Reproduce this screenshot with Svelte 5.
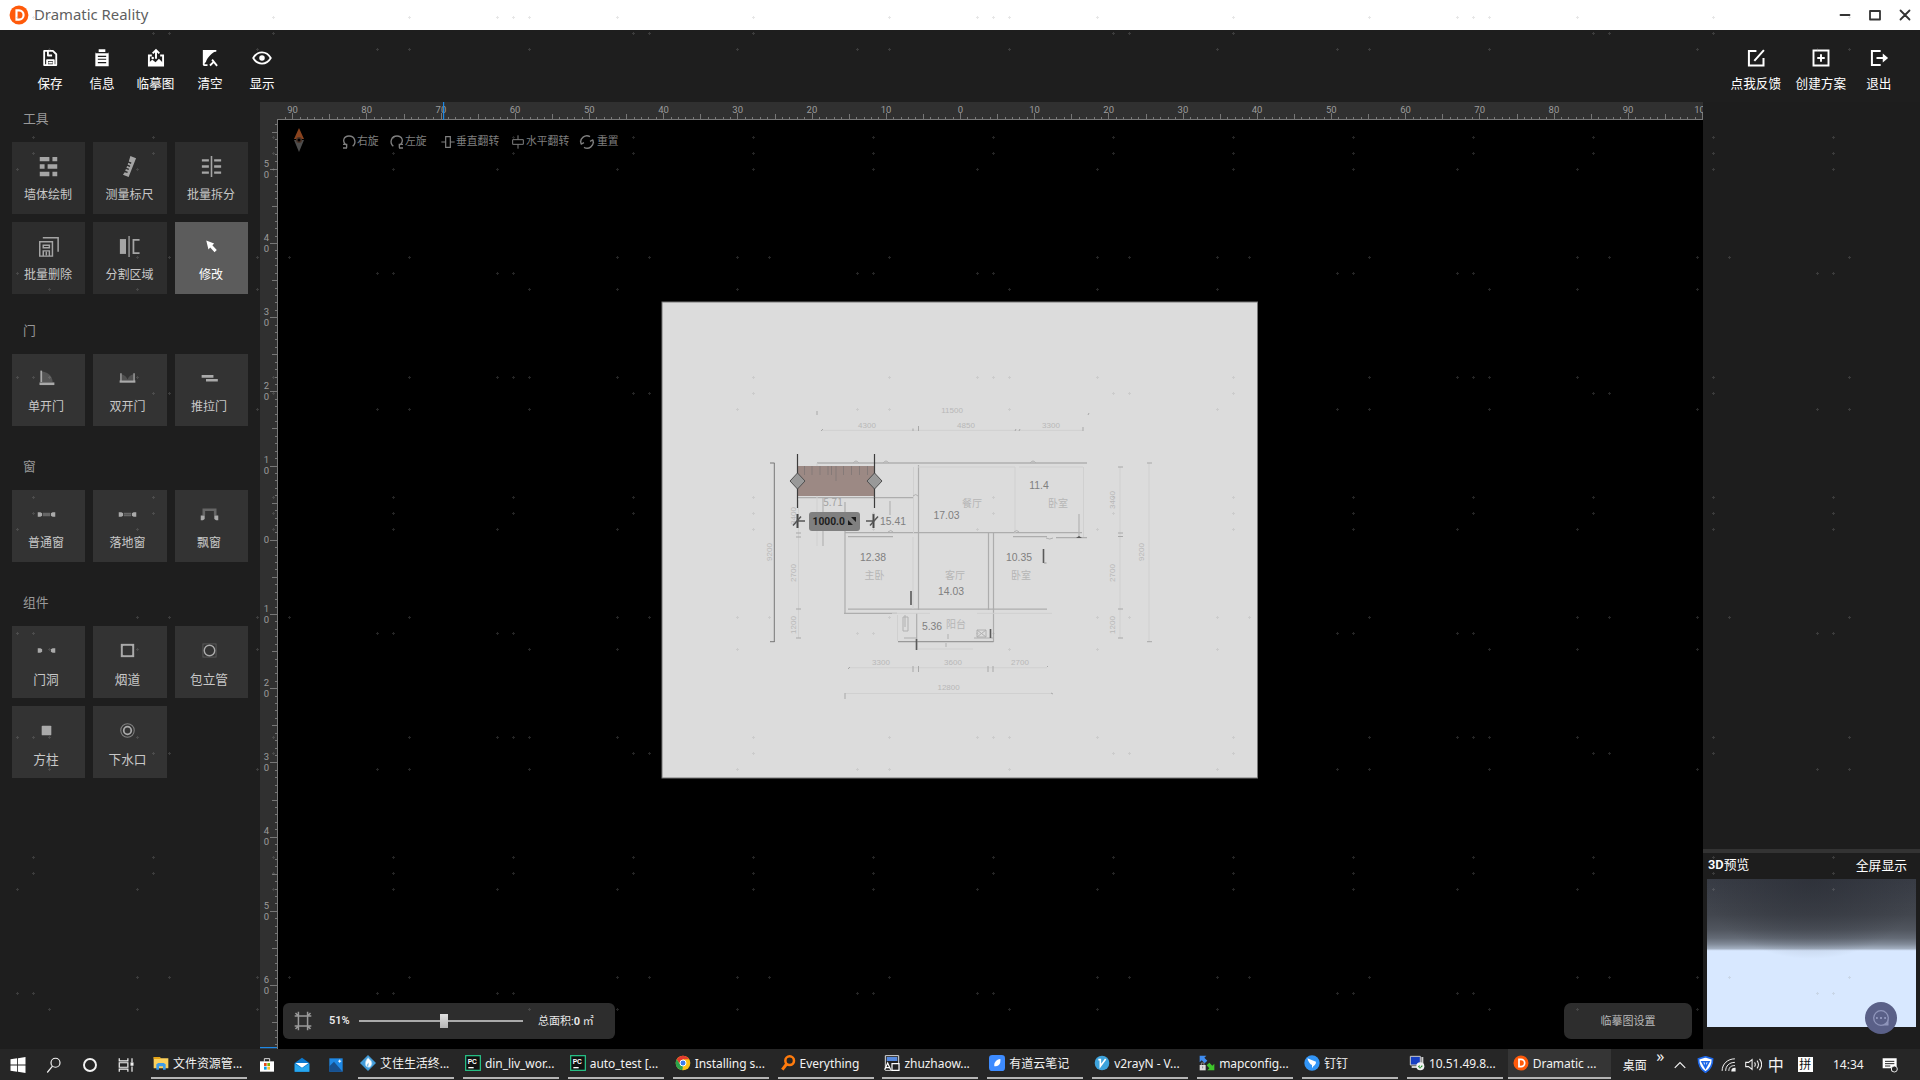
<script>
  const toolbar = [
    ['save', '保存'], ['info', '信息'], ['upload', '临摹图'], ['clear', '清空'], ['eye', '显示']
  ];
  const account = [['edit', '点我反馈'], ['plus', '创建方案'], ['exit', '退出']];
  const groups = [
    { title: '工具', kind: 'tools', items: [['wall', '墙体绘制'], ['measure', '测量标尺'], ['split', '批量拆分'], ['delete', '批量删除'], ['divide', '分割区域'], ['pointer', '修改']] },
    { title: '门', kind: 'parts', items: [['door1', '单开门'], ['door2', '双开门'], ['slide', '推拉门']] },
    { title: '窗', kind: 'parts', items: [['win', '普通窗'], ['win2', '落地窗'], ['bay', '飘窗']] },
    { title: '组件', kind: 'parts wide', items: [['hole', '门洞'], ['flue', '烟道'], ['pipe', '包立管'], ['column', '方柱'], ['drain', '下水口']] }
  ];
  const flips = [['cw', '右旋'], ['ccw', '左旋'], ['vflip', '垂直翻转'], ['hflip', '水平翻转'], ['reset', '重置']];
  const tasks = [
    ['aijia', '艾佳生活终...'], ['pc', 'din_liv_wor...'], ['pc', 'auto_test [...'], ['chrome', 'Installing s...'],
    ['every', 'Everything'], ['zhu', 'zhuzhaow...'], ['note', '有道云笔记'], ['v2', 'v2rayN - V...'],
    ['map', 'mapconfig...'], ['ding', '钉钉'], ['remote', '10.51.49.8...'], ['dr', 'Dramatic ...']
  ];

  const STEP = 7.42;
  const hTicks = [];
  for (let i = -91; i <= 100; i++) hTicks.push({ i, x: 960 + i * STEP });
  const vTicks = [];
  for (let i = -56; i <= 68; i++) vTicks.push({ i, y: 540.3 + i * STEP });

  // Registration marks inside one 480 x 360 tile, as [column, row] offsets.
  const marks = [
    [17, 17], [33, 17], [49, 17], [137, 17], [273, 17], [409, 17],
    [153, 33], [169, 33], [273, 33],
    [49, 49], [257, 49], [377, 49], [409, 49],
    [33, 137], [153, 137], [273, 137], [393, 137],
    [33, 153], [153, 153], [273, 153], [393, 153],
    [17, 169], [137, 169], [273, 169], [393, 169],
    [137, 257], [169, 257], [257, 257], [289, 257], [409, 257],
    [17, 273], [33, 273], [377, 273], [393, 273],
    [49, 289], [137, 289], [257, 289]
  ];

  const areas = [
    ['11.4', 1039, 489], ['17.03', 946.5, 518.5], ['15.41', 893, 525], ['12.38', 873, 561],
    ['10.35', 1019, 561], ['14.03', 951, 595], ['5.36', 932, 630]
  ];
  const rooms = [['餐厅', 972, 507], ['卧室', 1058, 507], ['主卧', 874.5, 579], ['客厅', 955, 579], ['卧室', 1021, 579], ['阳台', 956, 628]];
  const dims = [
    ['11500', 952, 412.5], ['4300', 867, 427.5], ['4850', 966, 427.5], ['3300', 1051, 427.5],
    ['3300', 881, 664.5], ['3600', 953, 664.5], ['2700', 1020, 664.5], ['12800', 948.6, 690]
  ];
  const sideDims = [
    ['9200', 771.5, 552], ['3400', 796, 516], ['2700', 796, 573], ['1200', 796, 625],
    ['3400', 1115, 500], ['2700', 1115, 573], ['1200', 1115, 625], ['9200', 1144, 552]
  ];
</script>

{#snippet icon(n)}
  <svg class="ic {n}" width="24" height="24" viewBox="0 0 24 24" fill="none" stroke="currentColor" stroke-width="2">
    {#if n === 'save'}
      <path d="M5 3.500h10.500l4 4V20.500H5zM9.500 4v5h5M8.500 20v-5.500h8V20M10 17.500h5" stroke-width="2.200" stroke-linejoin="round" />
    {:else if n === 'info'}
      <path d="M4 5h16v17H4zM8 1.500h8V5H8z" fill="currentColor" stroke="none" /><path d="M4 5.500h16M7 10h10M7 13.500h10M7 17.500h10" stroke="#1e1e1e" stroke-width="1.400" />
    {:else if n === 'upload'}
      <path d="M7 9H3.500v12h17V9H17M12 13V3M8 6.500l4-4 4 4" stroke-width="2.300" /><path d="M3 21v-3l4.500-4 4 3 4-4 5 5v3z" fill="currentColor" stroke="none" /><circle cx="8" cy="12" r="1.500" fill="currentColor" stroke="none" />
    {:else if n === 'clear'}
      <path d="M19.500 3.500H4.500v17M4 20.500h5M14.500 14l6 7.500M12 21l5-5" stroke-width="2.200" /><path d="M4 3h16c-6 3-11 8-13 14l-3 2z" fill="currentColor" stroke="none" />
    {:else if n === 'eye'}
      <path d="M1.500 12c5-9 16-9 21 0-5 9-16 9-21 0z" stroke-width="2.200" /><circle cx="12" cy="12" r="3.300" fill="currentColor" stroke="none" />
    {:else if n === 'edit'}
      <path d="M12.500 3.500H3.500v17.500H21v-9M10 15.500L21.500 2.500" stroke-width="2.400" />
    {:else if n === 'plus'}
      <path d="M3 3h18v18H3zM12 7.500v9M7.500 12h9" stroke-width="2.300" />
    {:else if n === 'exit'}
      <path d="M14 3.500H3.500v17H14M9 12h10" stroke-width="2.400" /><path d="M16.500 6.500l6.500 5.500-6.500 5.500z" fill="currentColor" stroke="none" />
    {:else if n === 'wall'}
      <path d="M2 1h11v5H2zM16.500 1H22v5h-5.500zM2 9.500h5.500v5H2zM11 9.500h11v5H11zM2 18h11v5H2zM16.500 18H22v5h-5.500z" fill="currentColor" stroke="none" />
    {:else if n === 'measure'}
      <path d="M13 0l6.500 2.500L11 24l-6.500-2.500 2-3 3 1 .6-1.500-3-1.200.8-2 3 1.200.6-1.500-3-1.200.8-2 3 1.200.6-1.500-3-1.200.8-2 3 1.200.5-1.500-3-1.200z" fill="currentColor" stroke="none" />
    {:else if n === 'split'}
      <path d="M12-1v26" stroke-width="1.800" /><path d="M1 5h8M1 12h8M1 19h8M15 5h8M15 12h8M15 19h8" stroke-width="2.800" />
    {:else if n === 'delete'}
      <path d="M2 6.500h14.500V23H2zM5.500 2H23v16M6 10.500h7v3H6zM6 22.500V17h7v5.500M9.500 18v4" stroke-width="1.700" />
    {:else if n === 'divide'}
      <path d="M1 3.500h7v17H1z" fill="currentColor" stroke="none" /><path d="M11.500-1v26" stroke-width="1.500" /><path d="M23.500 4.500H16.500v15h7" />
    {:else if n === 'pointer'}
      <path d="M6 5l9 3.500-2 2 5 5.500-2.500 2.500-5-5.500-2 2.500z" fill="currentColor" stroke="none" />
    {:else if n === 'door1'}
      <path d="M6 4c8 0 13 6 13 12H6z" fill="#555" stroke="none" /><path d="M6 3v13" stroke-width="2" /><path d="M4 18h17" stroke-width="3" />
    {:else if n === 'door2'}
      <path d="M5 7c4 1 6 3 7 6 1-3 3-5 7-6v7H5z" fill="#505050" stroke="none" /><path d="M4.500 6v9M19.500 6v9" stroke-width="1.500" /><path d="M3 15.500h18" stroke-width="2.600" />
    {:else if n === 'slide'}
      <path d="M3 9.500h13.500M8 14h13.500" stroke-width="3" />
    {:else if n === 'win' || n === 'win2'}
      <path d="M8 12h8" stroke="#666" stroke-width="4" /><path d="M8 12h8" stroke="#555" stroke-width={n === 'win' ? 0 : 1} /><path d="M2 9.500h3l2 1v3l-2 1H2zM22 9.500h-3l-2 1v3l2 1h3z" fill="currentColor" stroke="none" />
    {:else if n === 'bay'}
      <path d="M5.500 13V6.500h13V13" stroke="#666" stroke-width="3" /><path d="M2 13h4.500v4l-2 1.500H2zM22 13h-4.500v4l2 1.500H22z" fill="currentColor" stroke="none" />
    {:else if n === 'hole'}
      <path d="M2 9.500h3l2 1v3l-2 1H2zM22 9.500h-3l-2 1v3l2 1h3z" fill="currentColor" stroke="none" />
    {:else if n === 'flue'}
      <rect x="5.500" y="5.500" width="13" height="13" stroke-width="2.200" /><path d="M4.500 4.500h4.500l-4.500 4.500zM15 4.500h4.500V9zM4.500 15v4.500H9zM19.500 15v4.500H15z" fill="currentColor" stroke="none" />
    {:else if n === 'pipe'}
      <rect x="4.500" y="4.500" width="15" height="15" stroke="#5c5c5c" stroke-width="1" /><circle cx="12" cy="12" r="6" stroke-width="1.600" />
    {:else if n === 'column'}
      <rect x="6.500" y="6.500" width="11" height="11" rx="1" fill="currentColor" stroke="none" />
    {:else if n === 'drain'}
      <circle cx="12" cy="12" r="7.700" stroke="#808080" stroke-width="1.200" /><circle cx="12" cy="12" r="4.300" stroke-width="2" />
    {:else if n === 'cw'}
      <path d="M8.500 20.500v-5H3M8 16.500C1 11 4 3 12 3c8.500 0 12 9.500 5.500 15.500M3 21h6" />
    {:else if n === 'ccw'}
      <path d="M15.500 20.500v-5H21M16 16.500C23 11 20 3 12 3c-8.500 0-12 9.500-5.500 15.500M21 21h-6" />
    {:else if n === 'vflip'}
      <path d="M8.500 4h7v16h-7zM2 12h6.500M15.500 12H22" stroke-width="1.800" />
    {:else if n === 'hflip'}
      <path d="M4 8.500h16v7H4zM12 2v6.500M12 15.500V22" stroke-width="1.500" />
    {:else if n === 'reset'}
      <path d="M3 14.500A9.200 9.200 0 0 1 16.500 4M21 9.500A9.200 9.200 0 0 1 7.500 20M2 10l1.500 5 4-2M22 14l-1.500-5-4 2" stroke-width="2" />
    {:else if n === 'start'}
      <path d="M3 5l8-1v7.500H3zM12 3.800L21 2.500v9h-9zM3 12.500h8V20l-8-1zM12 12.500h9v9l-9-1.300z" fill="#fff" stroke="none" />
    {:else if n === 'search'}
      <circle cx="14" cy="9" r="6" stroke-width="1.600" /><path d="M10 13.500l-7 8.500" stroke-width="1.600" />
    {:else if n === 'cortana'}
      <circle cx="12" cy="12" r="8" stroke-width="2.600" />
    {:else if n === 'taskview'}
      <path d="M3 3v3.500h11.500V3M3 21v-3.500h11.500V21M3 9h11.500v6H3zM20 3v5M20 14v7" stroke-width="1.600" /><path d="M19 9.500h2v2.500h-2z" fill="#fff" />
    {:else if n === 'folder'}
      <path d="M1 3h9l2 2h11v15H1z" fill="#fbd05c" stroke="none" /><path d="M1 3h9l2 3H1z" fill="#e3a315" stroke="none" /><path d="M5 22v-8l3-2h8l3 2v8h-4v-5H9v5z" fill="#3d9be8" stroke="none" />
    {:else if n === 'store'}
      <path d="M8 7V2.500h8V7" stroke="#ddd" stroke-width="1.500" /><path d="M1.500 6.500h21V22h-21z" fill="#fff" stroke="none" /><path d="M7.500 9h4v4.500h-4z" fill="#e64a19" stroke="none" /><path d="M12.500 9h4v4.500h-4z" fill="#7cb305" stroke="none" /><path d="M7.500 14.500h4V19h-4z" fill="#039be5" stroke="none" /><path d="M12.500 14.500h4V19h-4z" fill="#fbc02d" stroke="none" />
    {:else if n === 'mail'}
      <path d="M1 9l11-8 11 8v13H1z" fill="#0b79cf" stroke="none" /><path d="M2 9h20l-10 7z" fill="#fff" stroke="none" /><path d="M1 10l11 7 11-7v12H1z" fill="#27a7ee" stroke="none" />
    {:else if n === 'photos'}
      <path d="M2 2h20v20H2z" fill="#1e88e5" stroke="none" /><path d="M2 22v-8l7-7 13 15z" fill="#17508f" stroke="none" /><path d="M17.500 4v4.500M15.300 6.300h4.500" stroke="#fff" stroke-width="1.500" />
    {:else if n === 'aijia'}
      <path d="M12 0l12 12-12 12L0 12z" fill="#429bd8" stroke="none" /><path d="M12 4c6 5 8 9 3 14-7 2-10-6-3-14zm1 8c-3 2-3 4-1 6" fill="#fff" stroke="#9bd1f3" stroke-width="1" />
    {:else if n === 'pc'}
      <rect x="1" y="1" width="22" height="22" fill="#111" stroke="#27c98b" stroke-width="1.800" /><path d="M5 19h8" stroke="#fff" /><text x="4" y="13" class="pctext">PC</text>
    {:else if n === 'chrome'}
      <circle cx="12" cy="12" r="11" fill="#fbc116" stroke="none" /><path d="M2.500 6.500A11 11 0 0 1 21.500 6.500H12l-4 8z" fill="#e33b2e" stroke="none" /><path d="M2.500 6.500l6 9 3.500 1-1 6.500A11 11 0 0 1 2.500 6.500z" fill="#2ba24c" stroke="none" /><circle cx="12" cy="12" r="4.500" fill="#3b7ded" stroke="#fff" stroke-width="1.500" />
    {:else if n === 'every'}
      <circle cx="14.500" cy="8.500" r="6.500" stroke="#ff7b0d" stroke-width="3.800" /><path d="M10 13.500L3.500 22" stroke="#ff7b0d" stroke-width="4.500" />
    {:else if n === 'zhu'}
      <path d="M2 1h20v22H2z" fill="#222" stroke="#ddd" stroke-width="1.500" /><path d="M4 3h16v6H4z" fill="#5588dd" stroke="none" /><path d="M12 13h10.500v10H12zM1 22l4.500-10L10 22M3 19h5" fill="#222" stroke="#fff" stroke-width="1.800" />
    {:else if n === 'note'}
      <rect x="0" y="0" width="24" height="24" rx="5" fill="#3d8bff" stroke="none" /><path d="M17 6c1 8-3 11-9 11-1-6 3-10 9-11z" fill="#fff" stroke="none" />
    {:else if n === 'v2'}
      <circle cx="12" cy="12" r="11" fill="#3ea3dc" stroke="none" /><path d="M6.500 7h3v10l8-11" stroke="#fff" stroke-width="2.400" />
    {:else if n === 'map'}
      <path d="M1 1h10L8 4l4.500 4.500-4 4L4 8l-3 3z" fill="#3f8cf0" stroke="none" /><path d="M23 23H12.500l3-3-4-4.500 4-4L20 16l3-3z" fill="#3ec52b" stroke="none" /><path d="M1 15h9v8H1z" fill="#ddd" stroke="none" /><path d="M3.500 15v-3h4v3M5.500 17v3" stroke="#888" stroke-width="1.500" />
    {:else if n === 'ding'}
      <circle cx="12" cy="12" r="11.500" fill="#3295f6" stroke="none" /><path d="M5 5l13 5c0 4-2 5-4 7l-2 3v-5C9 14 7 11 5 5z" fill="#fff" stroke="none" />
    {:else if n === 'remote'}
      <path d="M2 2h15v13H2z" fill="#173fc2" stroke="#ccc" stroke-width="1.500" /><path d="M4 18h10M20 3v10" stroke="#ccc" stroke-width="3" /><circle cx="17" cy="17" r="6" fill="#f3f3f3" stroke="none" /><path d="M14 18l2-2M18 18l2-2M15 19h3" stroke="#21922b" stroke-width="1.600" />
    {:else if n === 'dr'}
      <circle cx="12" cy="12" r="11.300" fill="#ff5a0a" stroke="none" /><path d="M9 6.500h3a5.500 5.500 0 0 1 0 11H9z" stroke="#fff" stroke-width="2.600" />
    {:else if n === 'chev'}
      <path d="M3 17l9-9 9 9" stroke-width="2" />
    {:else if n === 'shield'}
      <path d="M12 1l10 3c0 10-3 15-10 19C5 19 2 14 2 4z" fill="#fff" stroke="#1d67e8" stroke-width="2.400" /><path d="M7 8h10l-5 9zM12 8v8" stroke="#1d67e8" stroke-width="2.200" />
    {:else if n === 'wifi'}
      <path d="M3 21C3 11 11 4 21 4M8 21c0-7 5-12 13-12M12.500 21c0-5 3-7.500 8.500-7.500" stroke-width="1.400" /><path d="M17 21c0-2 1-3.500 4-3.500V21z" fill="currentColor" />
    {:else if n === 'sound'}
      <path d="M1 9h4l5-4v14l-5-4H1zM13.500 9q2 3 0 6M17 6.500q4 5.500 0 11M20.500 4q6 8 0 16" stroke-width="1.500" />
    {:else if n === 'notif'}
      <path d="M1 2h21v15h-5l-3 5v-5H1z" fill="#fff" stroke="none" /><path d="M4.500 6.500h14M4.500 10h14M4.500 13.500h8" stroke="#262626" stroke-width="1.500" /><circle cx="18.500" cy="18" r="4.500" fill="#262626" stroke="#fff" stroke-width="1.300" />
    {:else if n === 'fit'}
      <path d="M6.500 6h11v12h-11zM6.500 6V1M6.500 6H2M17.500 6V1M17.500 6H22M6.500 18v5M6.500 18H2M17.500 18v5M17.500 18H22M17.500 6L21 2.500M6.500 18L3 21.500M17.500 18l3.500 3.500M6.500 6L3 2.500" stroke-width="1.800" />
    {/if}
  </svg>
{/snippet}

<div class="app">
  <header class="title">
    {@render icon('dr')}
    <span>Dramatic Reality</span>
    <svg class="controls" width="90" height="30" viewBox="0 0 90 30" fill="none" stroke="#333" stroke-width="1.800">
      <path d="M10.500 15h9M40 11h10v8.500H40zM70.500 10.500l9 9M79.500 10.500l-9 9" stroke-linejoin="round" stroke-linecap="round" />
    </svg>
  </header>

  <nav class="menu">
    <div class="main-menu">
      {#each toolbar as [i, label]}<button>{@render icon(i)}<span>{label}</span></button>{/each}
    </div>
    <div class="side-menu">
      {#each account as [i, label]}<button>{@render icon(i)}<span>{label}</span></button>{/each}
    </div>
  </nav>

  <main>
    <aside class="library">
      {#each groups as g}
        <section class={g.kind}>
          <h2>{g.title}</h2>
          <div class="tiles">
            {#each g.items as [i, label]}
              <button class="tile" class:active={i === 'pointer'}>{@render icon(i)}<span>{label}</span></button>
            {/each}
          </div>
        </section>
      {/each}
    </aside>

    <div class="workspace">
      <svg class="hruler" width="1443" height="18" viewBox="260 102 1443 18">
        {#each hTicks as t}
          <rect x={Math.round(t.x)} y={t.i % 10 === 0 ? 113 : t.i % 5 === 0 ? 114 : 117} width="1" height="6" fill="#777" />
          {#if t.i % 10 === 0}<text x={t.x + 0.3} y="112.800">{Math.abs(t.i)}</text>{/if}
        {/each}
        <rect x="277" y="119" width="1426" height="1" fill="#777" />
        <rect x="443" y="102" width="1.200" height="18" fill="#1e88e5" />
      </svg>
      <svg class="vruler" width="18" height="929" viewBox="260 120 18 929">
        {#each vTicks as t}
          <rect x={t.i % 10 === 0 ? 270 : t.i % 5 === 0 ? 272 : 275} y={Math.round(t.y - 0.5)} width="8" height="1" fill="#777" />
          {#if t.i === 0}
            <text x="266.500" y="543">0</text>
          {:else if t.i % 10 === 0}
            <text x="266.500" y={t.y - 2.7}>{Math.abs(t.i) / 10}</text><text x="266.500" y={t.y + 8.3}>0</text>
          {/if}
        {/each}
        <rect x="277" y="120" width="1" height="929" fill="#777" />
        <rect x="260" y="1047" width="17" height="1.200" fill="#1e88e5" />
      </svg>

      <div class="canvas">
        <svg class="plan" width="1425" height="929" viewBox="278 120 1425 929" fill="none">
          <rect x="662" y="302" width="595.500" height="476" fill="#dcdcdc" stroke="#777" stroke-width="1" />
          <g stroke="#adadad" stroke-width="1.200">
            <path d="M817 463H1087" stroke="#999" />
            <path d="M918.500 465V610M845 502V613M988.500 533V610M993.500 533V642M848 609.200H1047M848 536.700H893M1013 536.700H1047M1056 537.700H1087M798 497.700H913" />
            <path d="M898 641.700H993.500" stroke="#999" />
            <path d="M844 613.300H897M845 532.700H1082M916.700 613V650M904 638H917M974 638H993" />
            <path d="M823 498V546M890 501V515M1079 514V537" stroke="#b4b4b4" />
          </g>
          <g stroke="#d0d0d0">
            <path d="M913.500 467V533M1015 467V533M1083.500 467V537M817 463V546M918 467H1015M1019 467H1083M913 537V609M977 613.300H1052M917 649H973M821 430.300H1083M848 667.700H1047M845 693.500H1051M798.500 500V638M1120 467V638M1149 463V642M892 613.300H930M897.500 615V641" />
          </g>
          <g stroke="#777">
            <path d="M774.300 463V642M770 463h4.500M770 641.700h4.500" />
            <path d="M911 591V605M1043.500 549V563M916.500 639V650M990.500 629V638" stroke="#5a5a5a" stroke-width="1.600" />
            <path d="M1044 563h2.500" stroke="#999" />
            <path d="M1076 538l3-2 3 2z" fill="#555" stroke="none" />
          </g>
          <path d="M817 415v-4M1088 415l1-2M821 431l2-2M913 431v-2.500M918.500 431v-5M1015 431l1-2M1019 431l1-2M1083 431v-4M848 669l2-2M913 666v6M918.500 666v6M988 666v6M993 666v6M1047 667l1-1M845 693v6M1051 693l2 1M1118 467h5M1118 533h5M1118 536.500h5M1118 609h5M1118 638h5M1147 463h5M1147 641.700h5M796 533h5M796 537h5M796 609h5M796 638h5" stroke="#a8a8a8" />
          <path d="M853 463q3-4 6 0M883 463q3-4 6 0M1030 463q3-4 6 0M913 496q3-3 5 0M888 532q3-3 5 0M1014 532q3-3 5 0M1046 538q4 2 7 0M903 617h5v14h-5zM905 615v12M977 630h9v7h-9zM977 630l9 7M986 630l-9 7M948 634v5M946 643v4" stroke="#b0b0b0" />
          {#each areas as [t, x, y]}<text class="area" {x} {y}>{t}</text>{/each}
          {#each rooms as [t, x, y]}<text class="room" {x} {y}>{t}</text>{/each}
          {#each dims as [t, x, y]}<text class="dim" {x} {y}>{t}</text>{/each}
          {#each sideDims as [t, x, y]}<text class="dim" {x} {y} transform="rotate(-90 {x} {y})">{t}</text>{/each}
          <text class="room dark" x="833" y="506">5.71</text>

          <rect x="797.500" y="466" width="77" height="30" fill="#9c8984" />
          <path d="M804.500 466v9M812 466v9M820 466v9M828 466v9M831.500 466v9M843.500 466v9M851.500 466v9M859.500 466v9M867.500 466v9M836 466v15" stroke="#857a78" />
          <path d="M797.500 454V508M874.500 454V508" stroke="#3c3c3c" stroke-width="1.200" />
          <path d="M797.500 473l7.500 8-7.500 8-7.500-8zM874.500 473l7.500 8-7.500 8-7.500-8z" fill="#999" stroke="#505050" />
          <path d="M797.500 514v14M873.500 514v14" stroke="#484848" stroke-width="2" />
          <path d="M798 521h7M866 521h7M793 525.500l8-9M870 525.500l8-9" stroke="#555" stroke-width="1.500" />
          <rect x="809" y="512" width="51" height="19" rx="3" fill="#808080" />
          <text class="measure-label" x="812.500" y="525" textLength="32.500" lengthAdjust="spacingAndGlyphs">1000.0</text>
          <path d="M851 517h5v5zM848 520l5 5h-5z" fill="#1a1a1a" />
        </svg>

        <div class="flips">
          <svg class="compass" width="12" height="24" viewBox="0 0 12 24"><path d="M6 0l5 11H1z" fill="#8a431e" /><path d="M6 24L1 12h10z" fill="#4d4d4d" /><circle cx="6" cy="12" r="3" fill="#4a3328" /><circle cx="6" cy="12" r="1.500" fill="#000" /></svg>
          {#each flips as [i, label]}<button class={'f-' + i}>{@render icon(i)}<span>{label}</span></button>{/each}
        </div>

        <div class="zoombar">
          {@render icon('fit')}
          <b>51%</b>
          <div class="slider"><i></i></div>
          <span>总面积:<b>0</b> ㎡</span>
        </div>
        <button class="settings">临摹图设置</button>
      </div>
    </div>

    <aside class="preview">
      <div class="preview-head"><span><b>3D</b>预览</span><span>全屏显示</span></div>
      <div class="scene"></div>
      <button class="chat">
        <svg width="18" height="18" viewBox="0 0 18 18" fill="none" stroke="#8f95bb" stroke-width="1.300"><path d="M16.500 9v7.500H10z" fill="#8f95bb" stroke="none" /><circle cx="9" cy="9" r="7.300" fill="#5a6088" /><path d="M4 9h1.800M8 9h2M12.200 9H14" stroke-width="2" /></svg>
      </button>
    </aside>
  </main>

  <footer class="taskbar">
    <div class="pins">
      {#each ['start', 'search', 'cortana', 'taskview'] as n}<span>{@render icon(n)}</span>{/each}
    </div>
    <div class="task explorer">{@render icon('folder')}<span>文件资源管...</span></div>
    <div class="apps">
      {#each ['store', 'mail', 'photos'] as n}<span>{@render icon(n)}</span>{/each}
    </div>
    <div class="tasks">
      {#each tasks as [i, label]}<div class="task" class:current={i === 'dr'}>{@render icon(i)}<span>{label}</span></div>{/each}
    </div>
    <div class="tray">
      <span class="desk">桌面</span><span class="more">»</span>
      <span>{@render icon('chev')}</span><span>{@render icon('shield')}</span><span>{@render icon('wifi')}</span><span>{@render icon('sound')}</span>
      <span class="zh">中</span><span><em>拼</em></span><span class="time">14:34</span><span>{@render icon('notif')}</span>
    </div>
  </footer>

  <svg class="marks" width="1920" height="1049">
    <defs>
      <pattern id="marks" width="480" height="360" patternUnits="userSpaceOnUse">
        {#each marks as [x, y]}
          <path d="M{x - 1} {y}h3v1h-3zM{x} {y - 1}h1v3h-1z" fill="#999" fill-opacity="0.240" />
        {/each}
      </pattern>
    </defs>
    <rect width="1920" height="1049" fill="url(#marks)" />
  </svg>
</div>

<style>
  :global(body) { margin: 0; background: #000; overflow: hidden; }
  .app {
    position: relative; width: 1920px; height: 1080px; overflow: hidden;
    display: grid; grid-template-rows: 30px 72px 947px 31px;
    background: #1e1e1e; color: #ddd;
    font-family: "Noto Sans", "Noto Sans CJK SC", sans-serif; font-size: 12px;
  }
  button { margin: 0; padding: 0; border: 0; background: none; color: inherit; font: inherit; }
  svg { display: block; flex: none; }
  .title { display: flex; align-items: center; background: #fff; color: #5f5f5f; padding-left: 9px; font-size: 14.900px; }
  .title > span { line-height: 20px; margin-top: -2px; }
  .title .ic { width: 20px; height: 20px; margin-right: 5px; }
  .title .controls { margin-left: auto; margin-right: 3px; }
  .menu { display: flex; justify-content: space-between; color: #fff; font-size: 12.600px; }
  .main-menu { display: grid; grid-template-columns: 52px 52px 55px 54px 50px; padding-left: 24px; }
  .side-menu { display: grid; grid-template-columns: 66px 64px 52px; padding-right: 18px; }
  .menu button { display: flex; flex-direction: column; align-items: center; padding-top: 18px; white-space: nowrap; }
  .menu .ic { width: 20px; height: 20px; }
  .menu button span { line-height: 18px; margin-top: 7px; }

  main { display: grid; grid-template-columns: 260px 1443px 217px; }
  section { height: 136px; }
  section.tools { height: 212px; }
  h2 { margin: 0; height: 40px; box-sizing: border-box; padding: 7px 0 0 23px; font-size: 12.800px; line-height: 19px; font-weight: 400; color: #999; }
  .tiles { display: grid; grid-template-columns: 73px 74px 73px; gap: 8px; padding-left: 12px; }
  .tile { height: 72px; display: flex; flex-direction: column; align-items: center; background: #2d2d2d; color: #c8c8c8; padding-top: 14px; box-sizing: border-box; }
  .tile .ic { width: 21px; height: 21px; color: #a5a5a5; }
  .tile span { line-height: 18px; margin-top: 9px; }
  .tools .tile { padding-right: 1px; }
  .parts .tile { background: #333; padding-right: 5px; }
  .parts .tile .ic { color: #aaa; }
  .parts .tile span { margin-top: 8.500px; }
  .wide .tile { font-size: 12.700px; }
  .tile.active { background: #5c5c5c; color: #fff; }
  .tile.active .ic { color: #fff; }

  .workspace { display: grid; grid-template-columns: 18px 1425px; grid-template-rows: 18px 929px; background: #000; }
  .hruler { grid-column: 1 / 3; background: #303030; }
  .vruler { background: #303030; }
  .hruler text, .vruler text { font: 9.500px Roboto, sans-serif; fill: #9c9c9c; text-anchor: middle; }
  .canvas { position: relative; }
  .area { font: 10.400px "Liberation Sans", sans-serif; fill: #808080; text-anchor: middle; }
  .room { font: 10px "Noto Sans CJK SC", sans-serif; fill: #b6b6b6; text-anchor: middle; }
  .room.dark { fill: #a2a2a2; }
  .dim { font: 8px "Liberation Sans", sans-serif; fill: #b8b8b8; text-anchor: middle; }
  .measure-label { font: 700 11px Roboto, sans-serif; fill: #1e1e1e; }

  .flips { position: absolute; top: 8px; left: 15px; display: flex; align-items: center; color: #7f7f7f; font-size: 10.800px; height: 26px; }
  .compass { margin-right: 36px; margin-top: -2px; }
  .flips button { display: flex; align-items: center; line-height: 16px; }
  .flips .ic { width: 16px; height: 16px; margin-top: 1px; }
  .f-cw { width: 48px; }
  .f-ccw { width: 51px; }
  .f-vflip { width: 70px; }
  .f-hflip { width: 69px; }
  .f-reset span { margin-left: 2px; }

  .zoombar { position: absolute; left: 5px; top: 883px; width: 332px; height: 36px; border-radius: 6px; background: #2d2d2d; display: flex; align-items: center; font: 11px Roboto, "Noto Sans CJK SC", sans-serif; color: #e8e8e8; }
  .zoombar .ic { width: 20px; height: 20px; margin-left: 10px; color: #999; }
  .zoombar > b { width: 30px; margin: -2px 0 0 16px; font-size: 11px; font-weight: 600; }
  .slider { width: 164px; height: 2px; background: #aaa; }
  .slider i { display: block; width: 8px; height: 14px; margin: -6px 0 0 81px; background: linear-gradient(#e0e0e0, #b5b5b5); }
  .zoombar > span { margin: -2px 0 0 15px; white-space: pre; }
  .settings { position: absolute; left: 1286px; top: 883px; width: 128px; height: 36px; border-radius: 7px; background: #2d2d2d; color: #b9b9b9; font-size: 11px; padding-bottom: 2px; }

  .preview { position: relative; background: #1d1d1d; padding-top: 747px; }
  .preview-head { box-sizing: border-box; height: 30px; border-top: 4px solid #333; display: flex; align-items: center; justify-content: space-between; padding: 0 13px 3px 5px; color: #fff; font-size: 12.800px; line-height: 18px; }
  .preview-head b { font-weight: 600; font-family: Roboto, sans-serif; }
  .scene {
    height: 148px; margin: 0 4px;
    background:
      radial-gradient(ellipse 110px 80px at 50% 0, #2a2d35aa, transparent),
      linear-gradient(#383c45 0, #42464e 24%, #50555e 34%, #646b76 40%, #818a98 44%, #a2aebf 47%, #d8e8ff 48.500%);
  }
  .preview .scene { margin-top: 0; }
  .preview .preview-head { height: 30px; }
  .chat { position: absolute; left: 162px; top: 900px; width: 32px; height: 32px; border-radius: 50%; background: #5a6088; display: grid; place-items: center; }

  .taskbar { display: flex; background: #262626; color: #f2f2f2; font-size: 12px; }
  .taskbar .ic { width: 16px; height: 16px; }
  .pins { display: grid; grid-template-columns: repeat(4, 36px); width: 151px; }
  .apps { box-sizing: border-box; display: grid; grid-template-columns: 36px 34px 34px; width: 111px; padding-left: 2px; }
  .pins span, .apps span { display: grid; place-items: center; }
  .pins .start { width: 20px; height: 20px; }
  .pins .search, .pins .cortana, .pins .taskview { width: 18px; height: 18px; }
  .task { width: 96px; height: 30px; box-sizing: border-box; border-bottom: 2px solid #b5b5b5; padding-left: 2px; display: flex; align-items: center; white-space: nowrap; }
  .task > span { margin-left: 4px; letter-spacing: -0.050px; }
  .tasks { display: flex; gap: 8.900px; }
  .task.current { width: 103px; margin-left: -4px; padding-left: 5px; background: #353535; }
  .pctext { font: 700 10px "Liberation Sans", sans-serif; fill: #fff; stroke: none; }
  .tray { display: grid; grid-template-columns: 38px 13px 27px 23px 24px 25px 20px 39px 47px 37px 14px; margin-left: 5px; align-items: center; }
  .tray span { display: grid; place-items: center; }
  .tray .more { font-size: 16px; margin-top: -17px; }
  .tray .chev { width: 14px; height: 14px; }
  .tray .wifi, .tray .sound, .tray .shield { width: 17px; height: 17px; }
  .tray .zh { font-size: 16px; margin-top: -2px; }
  .tray em { font-style: normal; background: #fff; color: #111; font-size: 12px; line-height: 15px; width: 15px; text-align: center; }
  .marks { position: absolute; inset: 0; pointer-events: none; }
</style>
